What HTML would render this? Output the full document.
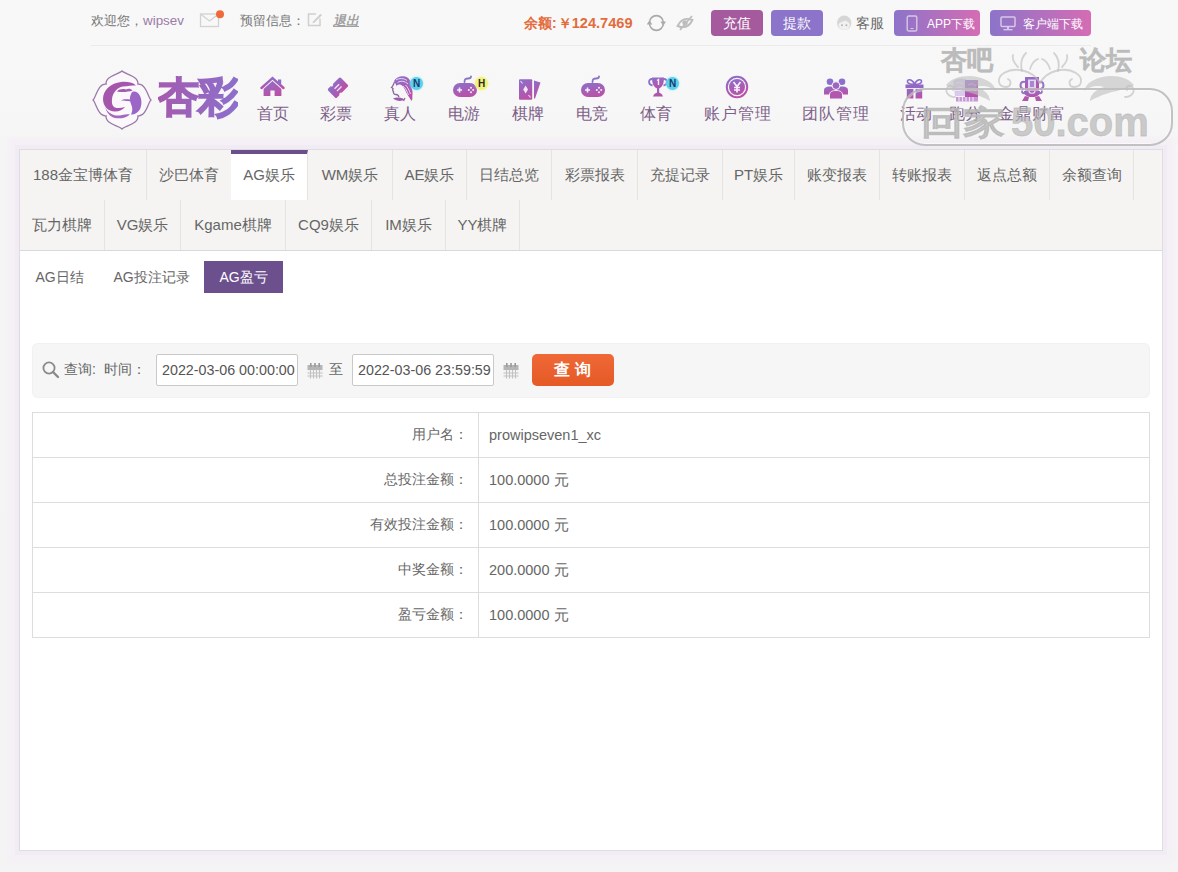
<!DOCTYPE html>
<html><head><meta charset="utf-8">
<style>
*{box-sizing:border-box;margin:0;padding:0}
html,body{width:1178px;height:872px;overflow:hidden}
body{position:relative;background:linear-gradient(#f8f8f8 0,#f7f7f7 100px,#f5f5f5 140px,#f4f4f4 872px);font-family:"Liberation Sans",sans-serif;color:#666;font-size:14px}
.abs{position:absolute;white-space:nowrap}
/* top bar */
#top{position:absolute;left:0;top:0;width:1178px;height:46px;background:#f8f8f8}
#sep{position:absolute;left:91px;top:45px;width:1000px;height:1px;background:#ebebeb}
.t13{font-size:13px;color:#777;line-height:16px}
.btn{position:absolute;top:10px;height:26px;border-radius:4px;color:#fff;font-size:14px;font-weight:500;line-height:27px;text-align:center}
.grad{background:linear-gradient(90deg,#8c74c9,#d56cb4)}
/* nav */
.nav{position:absolute;top:104px;font-size:16px;color:#7d6088;line-height:20px;white-space:nowrap}
.ico{position:absolute}
.badge{width:13px;height:13px;border-radius:50%;font-size:10px;font-weight:bold;line-height:13px;text-align:center;box-shadow:0 0 1.5px 0.5px rgba(140,225,245,.6)}
.wm{color:rgba(180,180,180,.66);font-weight:bold;line-height:1;-webkit-text-stroke:0.8px rgba(180,180,180,.66)}
/* panel */
#panel{position:absolute;left:19px;top:149px;width:1144px;height:702px;background:#fff;border:1px solid #e0dce3;box-shadow:0 0 0 4px #f1ecf3,0 0 4px 11px #f5f0f5}
#tabs{position:absolute;left:0;top:0;width:1142px;height:101px;background:#f5f4f2;border-bottom:1px solid #d9d9d9}
.tab{position:absolute;height:50px;line-height:50px;font-size:15px;color:#666;text-align:center;border-right:1px solid #e6e4e1;white-space:nowrap}
.tab.on{background:#fff;border-top:4px solid #6b4e8c;line-height:42px}
.sub{position:absolute;top:111px;height:32px;line-height:32px;font-size:14px;color:#666;text-align:center;white-space:nowrap}
.sub.on{background:#6c4f8d;color:#fff}
#search{position:absolute;left:12px;top:193px;width:1118px;height:55px;background:#f6f6f6;border-radius:6px;box-shadow:inset 0 0 0 1px #f1f1f1}
.inp{position:absolute;top:11px;width:142px;height:32px;background:#fff;border:1px solid #c9c9c9;border-radius:2px;font-size:14.3px;color:#555;line-height:30px;padding-left:5px;white-space:nowrap}
#qbtn{position:absolute;left:500px;top:11px;width:82px;height:32px;border-radius:5px;background:linear-gradient(#ef6836,#e55a27);color:#fff;font-size:16px;font-weight:bold;line-height:32px;text-align:center;letter-spacing:5px;padding-left:3px}
table{position:absolute;left:12px;top:262px;width:1118px;border-collapse:collapse}
td{height:45px;border:1px solid #dddddd;font-size:14px;color:#666}
td.l{width:446px;text-align:right;padding-right:10px}
td.r{padding-left:10px;color:#666;font-size:14.5px}
</style></head><body>

<div id="sep"></div>
<div class="abs t13" style="left:91px;top:13px">欢迎您，<span style="color:#9a7ca6;font-size:13.4px">wipsev</span></div>
<div class="abs t13" style="left:240px;top:13px">预留信息：</div>
<div class="abs t13" style="left:333px;top:13px;color:#a0a0a0;font-style:italic;font-weight:bold;text-decoration:underline">退出</div>
<div class="abs" style="left:524px;top:15px;font-size:14px;font-weight:bold;color:#e36c3c;line-height:16px">余额:<span style="font-size:14px;margin-left:1px">￥</span><span style="font-size:14.6px">124.7469</span></div>

<div class="btn" style="left:711px;width:52px;background:#a45a9d">充值</div>
<div class="btn" style="left:771px;width:52px;background:#8b74c9">提款</div>
<div class="abs t13" style="left:856px;top:15px;font-size:14px;color:#6a6a6a">客服</div>
<div class="btn grad" style="left:894px;width:86px;font-size:12px;font-weight:500;padding-left:28px;line-height:28px">APP下载</div>
<div class="btn grad" style="left:990px;width:101px;font-size:12px;font-weight:500;padding-left:25px;line-height:28px">客户端下载</div>


<svg width="0" height="0" style="position:absolute">
 <defs>
  <linearGradient id="pg" x1="0" y1="0" x2="0.35" y2="1">
   <stop offset="0" stop-color="#8a70cc"/><stop offset="1" stop-color="#b852a8"/>
  </linearGradient>
  <linearGradient id="lg" x1="0" y1="0" x2="1" y2="0.3">
   <stop offset="0" stop-color="#a558b0"/><stop offset="1" stop-color="#8c6fcc"/>
  </linearGradient>
 </defs>
</svg>
<!-- top icons -->
<svg class="ico" style="left:199px;top:10px" width="26" height="18" viewBox="0 0 26 18">
 <rect x="1.5" y="4" width="18" height="12.5" fill="none" stroke="#d2d2d2" stroke-width="1.3"/>
 <path d="M1.8 4.3 L10.5 11 L19.2 4.3" fill="none" stroke="#d2d2d2" stroke-width="1.3"/>
 <circle cx="21" cy="4.2" r="4" fill="#ef6a3a"/>
</svg>
<svg class="ico" style="left:307px;top:12px" width="16" height="15" viewBox="0 0 16 15">
 <path d="M9 2 H1.5 V13.5 H13 V6.5" fill="none" stroke="#cfcfcf" stroke-width="1.5"/>
 <path d="M6 9.5 L13.5 1.8 L15 3.2 L7.3 10.8 L5.6 11.2 Z" fill="#cfcfcf"/>
</svg>
<svg class="ico" style="left:647px;top:14px" width="19" height="18" viewBox="0 0 19 18">
 <path d="M2.5 8.5 A6.9 6.9 0 0 1 16.3 8.5" fill="none" stroke="#aaaaaa" stroke-width="1.6"/>
 <path d="M16.3 9.5 A6.9 6.9 0 0 1 2.5 9.5" fill="none" stroke="#aaaaaa" stroke-width="1.6"/>
 <path d="M13.4 7.6 L19 7.6 L16.3 11.8 Z" fill="#aaaaaa"/>
 <path d="M-0.3 10.4 L5.3 10.4 L2.5 6.2 Z" fill="#aaaaaa"/>
</svg>
<svg class="ico" style="left:676px;top:14px" width="18" height="18" viewBox="0 0 18 18">
 <g transform="rotate(-22 9 9)">
  <path d="M1 9 Q9 1.5 17 9 Q9 16.5 1 9Z" fill="none" stroke="#bdbdbd" stroke-width="1.9"/>
  <circle cx="9" cy="9" r="2.6" fill="#bdbdbd"/>
 </g>
 <path d="M4 16 L16 2" stroke="#bdbdbd" stroke-width="1.8"/>
</svg>
<svg class="ico" style="left:836px;top:13px" width="17" height="18" viewBox="0 0 17 18">
 <circle cx="8.2" cy="9.8" r="7.2" fill="#d6d6d6"/>
 <path d="M2.6 11 C4 9 7 8.5 9.5 7.5 C11 8.5 13 9.5 13.8 11 C13.8 14.5 11.5 16.8 8.2 16.8 C4.9 16.8 2.6 14.5 2.6 11Z" fill="#f1f1f1"/>
 <circle cx="6" cy="12.2" r="1" fill="#b5b5b5"/><circle cx="10.4" cy="12.2" r="1" fill="#b5b5b5"/>
</svg>
<svg class="ico" style="left:906px;top:15px" width="12" height="17" viewBox="0 0 12 17">
 <rect x="1.2" y="1" width="9.6" height="15" rx="1.6" fill="none" stroke="rgba(255,255,255,.6)" stroke-width="1.4"/>
 <rect x="4.5" y="13" width="3" height="1" fill="rgba(255,255,255,.6)"/>
</svg>
<svg class="ico" style="left:1000px;top:16px" width="16" height="15" viewBox="0 0 16 15">
 <rect x="1" y="1" width="14" height="9.5" rx="1" fill="none" stroke="rgba(255,255,255,.6)" stroke-width="1.5"/>
 <rect x="7" y="11" width="2" height="2" fill="rgba(255,255,255,.6)"/>
 <rect x="3.5" y="13" width="9" height="1.4" fill="rgba(255,255,255,.6)"/>
</svg>

<!-- logo -->
<svg class="ico" style="left:91px;top:69px" width="62" height="62" viewBox="0 0 62 62">
 <path d="M 31 2 C 33.50 5.00 48.00 7.00 46.90 15.10 C 55.00 14.00 57.00 28.50 60.00 31.00 C 57.00 33.50 55.00 48.00 46.90 46.90 C 48.00 55.00 33.50 57.00 31.00 60.00 C 28.50 57.00 14.00 55.00 15.10 46.90 C 7.00 48.00 5.00 33.50 2.00 31.00 C 5.00 28.50 7.00 14.00 15.10 15.10 C 14.00 7.00 28.50 5.00 31.00 2.00 Z" fill="#fbf8fc" stroke="#9b7aa8" stroke-width="1.3"/>
 <path d="M45 16.4 C41 13 35 12.5 30 13 C20 14 12 21 12 30 C12 37 17 42.5 24 42.5 C28.5 42.5 32 40.5 34 38 C30.5 39 26.5 39.5 24 38.5 C21.5 37.5 20.5 34 21 30.5 C21.5 24 26 18.5 32 17.5 C37 16.8 41 16.5 45 16.4 Z" fill="#a456ac"/>
 <path d="M26 22.5 C28 20 32 19.5 35 20.5 C37 19 40 19.5 41.5 21.5 C38 23 30 23.5 26 22.5Z" fill="#a25cb2"/>
 <path d="M42 22.5 C45 22 48 24 49 27 C51 31 51 37 48.5 41 C46.5 44 43 46 40 45.5 C42 42 41.5 38 40 35 C38.5 32 38.5 28 40 25 C40.5 24 41 23 42 22.5Z" fill="#9b66c6"/>
 <path d="M30 31.5 C32 30 35 30 39 30.5 L39 32.2 C35 31.8 32 31.8 30 31.5Z" fill="#9b62c0"/>
 <path d="M14 38 C17 44 22 47 28 46.5 C32 46 35 44.5 39 45.5 C35 49 29 50 24 49 C19 48 15.5 43 14 38Z" fill="#a468bd"/>
</svg>
<div class="abs" id="logotxt" style="left:158px;top:69px;font-size:41px;font-weight:900;line-height:56px;letter-spacing:-1px;background:linear-gradient(90deg,#a55aaf,#8c70cc);-webkit-background-clip:text;background-clip:text;color:transparent;-webkit-text-stroke:1.6px transparent">杏彩</div>
<!-- nav icons -->
<svg class="ico" style="left:260px;top:76px" width="26" height="22" viewBox="0 0 26 22">
 <path d="M1.5 12 L12.5 2 L23.5 12" fill="none" stroke="url(#pg)" stroke-width="2.4" stroke-linecap="round"/>
 <rect x="18" y="3.5" width="3.2" height="5" fill="#8d6fcb"/>
 <path d="M3.6 13 L12.5 5 L21.4 13 V20 H14.6 V14.5 H10.4 V20 H3.6 Z" fill="url(#pg)"/>
</svg>
<svg class="ico" style="left:324px;top:74px" width="28" height="28" viewBox="0 0 28 28">
 <g transform="translate(14 13.7) rotate(-45)">
  <rect x="-9" y="-6.2" width="18" height="12.4" rx="1.5" fill="url(#pg)"/>
  <circle cx="-2.5" cy="-6.6" r="1.6" fill="#f6f6f7"/>
  <circle cx="-2.5" cy="6.6" r="1.6" fill="#f6f6f7"/>
  <rect x="-3.2" y="-2.3" width="6.5" height="1.3" fill="#f3e6f8"/>
  <rect x="-3.2" y="1.0" width="6.5" height="1.3" fill="#f3e6f8"/>
 </g>
</svg>
<svg class="ico" style="left:387px;top:75px" width="27" height="27" viewBox="0 0 27 27">
 <path d="M7 6 C9 2 14 0.5 18 1.5 C22 2.5 24 6 24 10 C24 13 26 15 25.5 19 C25 22 26 24 24.5 26 C23 23 21 21 19.5 18 C18 15 17 12 15 10.5 C13 9 11 9.5 9.5 11 C9 9 8 8 7 6Z" fill="url(#pg)"/>
 <path d="M9 5 C12 3 17 3 20 5.5 M10.5 7.5 C13.5 5.5 18 6 21 9 M16 11 C18.5 13 20 16 21.5 20 M18.5 10 C21 12.5 22 15 23.5 19" fill="none" stroke="#efe3f7" stroke-width=".9"/>
 <path d="M7.5 7 C6.5 9 6.5 10.5 4.5 12.5 L6 13.5 C5.5 15 5.5 16 6.5 16.5 C6 18 7 19.5 9 19.5 C10.5 19.5 11.5 20.5 12 22" fill="none" stroke="#8a6a98" stroke-width="1.3"/>
 <path d="M6 23.5 C9 22 14 22 17.5 24.5 C15 26.5 9.5 26.5 6 23.5Z" fill="#a05ab0"/>
 <path d="M18 23 L16.5 26" stroke="#8a6a98" stroke-width="1.3"/>
</svg>
<svg class="ico" style="left:452px;top:75px" width="26" height="23" viewBox="0 0 26 23">
 <path d="M12.5 7 C12.5 4 14 3.5 16 3.5 C18 3.5 19 3 19 1.5" fill="none" stroke="#8a74c0" stroke-width="1.8" stroke-linecap="round"/>
 <rect x="1" y="8" width="24" height="14" rx="7" fill="url(#pg)"/>
 <path d="M5 15 H10 M7.5 12.5 V17.5" stroke="#f5eefa" stroke-width="1.6"/>
 <circle cx="19" cy="12.8" r="1" fill="#f5eefa"/><circle cx="19" cy="17.2" r="1" fill="#f5eefa"/>
 <circle cx="16.8" cy="15" r="1" fill="#f5eefa"/><circle cx="21.2" cy="15" r="1" fill="#f5eefa"/>
</svg>
<svg class="ico" style="left:517px;top:78px" width="25" height="23" viewBox="0 0 25 23">
 <rect x="2" y="1.3" width="13.2" height="20.5" rx="1" fill="url(#pg)"/>
 <path d="M17 2.5 L23.5 4.5 L18 20.5 L17 20.5Z" fill="url(#pg)"/>
 <path d="M8.6 7.5 L11 11.5 L8.6 15.5 L6.2 11.5Z" fill="#f1e5f8"/>
 <path d="M3.5 3 L5.5 5.5 M13.5 19.5 L11.5 17" stroke="#e8d8f4" stroke-width="1.2"/>
</svg>
<svg class="ico" style="left:580px;top:75px" width="26" height="23" viewBox="0 0 26 23">
 <path d="M12.5 7 C12.5 4 14 3.5 16 3.5 C18 3.5 19 3 19 1.5" fill="none" stroke="#8a74c0" stroke-width="1.8" stroke-linecap="round"/>
 <rect x="1" y="8" width="24" height="14" rx="7" fill="url(#pg)"/>
 <path d="M5 15 H10 M7.5 12.5 V17.5" stroke="#f5eefa" stroke-width="1.6"/>
 <circle cx="19" cy="12.8" r="1" fill="#f5eefa"/><circle cx="19" cy="17.2" r="1" fill="#f5eefa"/>
 <circle cx="16.8" cy="15" r="1" fill="#f5eefa"/><circle cx="21.2" cy="15" r="1" fill="#f5eefa"/>
</svg>
<svg class="ico" style="left:647px;top:76px" width="22" height="22" viewBox="0 0 22 22">
 <path d="M5 1.5 H17 C17 8 15 12 11 12.5 C7 12 5 8 5 1.5Z" fill="url(#pg)"/>
 <path d="M5 3 C1 3 1 9 5.5 9.5 M17 3 C21 3 21 9 16.5 9.5" fill="none" stroke="#8d6fcb" stroke-width="1.8"/>
 <rect x="10" y="12" width="2.2" height="5" fill="#9a64be"/>
 <path d="M6 20.5 C7 17.5 9 16.5 11 16.5 C13 16.5 15 17.5 16 20.5Z" fill="#b056a8"/>
 <path d="M10 4.5 L11.5 3.5 V9" fill="none" stroke="#f4ecf8" stroke-width="1.4"/>
</svg>
<svg class="ico" style="left:725px;top:75px" width="24" height="24" viewBox="0 0 24 24">
 <circle cx="12" cy="12" r="10.2" fill="none" stroke="url(#pg)" stroke-width="2"/>
 <circle cx="12" cy="12" r="8" fill="url(#pg)"/>
 <path d="M8.5 7 L12 11.5 L15.5 7 M12 11.5 V17.5 M9 12.5 H15 M9 15 H15" fill="none" stroke="#f6eefa" stroke-width="1.7"/>
</svg>
<svg class="ico" style="left:823px;top:78px" width="26" height="22" viewBox="0 0 26 22">
 <circle cx="7" cy="3.8" r="3.3" fill="#8c70cc"/>
 <path d="M1 16.5 V12.5 C1 9.5 3.5 8.5 7 8.5 C10.5 8.5 13 9.5 13 12.5 V16.5Z" fill="url(#pg)"/>
 <circle cx="19" cy="3.8" r="3.3" fill="#8c70cc"/>
 <path d="M13 16.5 V12.5 C13 9.5 15.5 8.5 19 8.5 C22.5 8.5 25 9.5 25 12.5 V16.5Z" fill="url(#pg)"/>
 <circle cx="13" cy="7.6" r="3.9" fill="#9a66c0" stroke="#f6f1f9" stroke-width="1"/>
 <path d="M6.5 21 V17 C6.5 13.5 9.5 12.5 13 12.5 C16.5 12.5 19.5 13.5 19.5 17 V21Z" fill="#b058ad" stroke="#f6f1f9" stroke-width="1"/>
</svg>
<svg class="ico" style="left:904px;top:78px" width="21" height="22" viewBox="0 0 21 22">
 <path d="M10.5 6 C8 1 3 0.5 3.5 4 C4 6 8 6.5 10.5 6 C13 6.5 17 6 17.5 4 C18 0.5 13 1 10.5 6Z" fill="none" stroke="#8d6fcb" stroke-width="1.6"/>
 <rect x="1.5" y="6.5" width="18" height="3.6" fill="#9268c4"/>
 <rect x="2.8" y="11" width="6.6" height="9.5" fill="url(#pg)"/>
 <rect x="11.6" y="11" width="6.6" height="9.5" fill="url(#pg)"/>
</svg>
<svg class="ico" style="left:952px;top:76px" width="28" height="26" viewBox="0 0 28 26">
 <path d="M1 5 C5 2 10 2 14 3 L14 20 L3 20 Z" fill="#d9c9ea"/>
 <path d="M4 8 C6 6 9 6 11 8 M3 13 C6 11 9 11 12 13" fill="none" stroke="#f4eef8" stroke-width="1"/>
 <path d="M13 4 L26 4 L26 21 L13 21 Z" fill="url(#pg)"/>
 <path d="M16 9 C19 7 22 8 24 10 M17 14 C19 13 22 13 24 15" fill="none" stroke="#c7a6e0" stroke-width="1"/>
 <path d="M4 21 H26 V25.5 H4Z" fill="#c795d8"/>
 <path d="M7 21 V25.5 M10.5 21 V25.5 M14 21 V25.5 M17.5 21 V25.5 M21 21 V25.5" stroke="#f1e6f5" stroke-width="1.1"/>
</svg>
<svg class="ico" style="left:1018px;top:76px" width="28" height="26" viewBox="0 0 28 26">
 <rect x="7" y="1" width="14" height="14" fill="url(#pg)"/>
 <rect x="10" y="3.5" width="8" height="9" fill="#e3d4f1"/>
 <path d="M12 5 H16 V11 H12Z" fill="#a886d0"/>
 <path d="M7 6 C2 5 1 11 5 13 C3 15 4 18 7 17 M21 6 C26 5 27 11 23 13 C25 15 24 18 21 17" fill="none" stroke="#9a72c6" stroke-width="2"/>
 <path d="M6 15 H22 C22 19 19 21 14 21 C9 21 6 19 6 15Z" fill="url(#pg)"/>
 <path d="M11 15 C11 18 17 18 17 15" fill="none" stroke="#e8dcf3" stroke-width="1.2"/>
 <path d="M7 20 L4 25 H10 L11 21 M21 20 L24 25 H18 L17 21" fill="#b158ad"/>
</svg>
<!-- badges -->
<div class="abs badge" style="left:410px;top:77px;background:#5ccfec;color:#173a6a">N</div>
<div class="abs badge" style="left:475px;top:77px;background:#f2f27a;color:#2a2a2a;box-shadow:0 0 1.5px .5px rgba(245,245,150,.7)">H</div>
<div class="abs badge" style="left:666px;top:77px;background:#5ccfec;color:#173a6a">N</div>

<!-- nav -->
<div class="nav" style="left:257px">首页</div>
<div class="nav" style="left:320px">彩票</div>
<div class="nav" style="left:384px">真人</div>
<div class="nav" style="left:448px">电游</div>
<div class="nav" style="left:512px">棋牌</div>
<div class="nav" style="left:576px">电竞</div>
<div class="nav" style="left:640px">体育</div>
<div class="nav" style="left:704px;letter-spacing:1px">账户管理</div>
<div class="nav" style="left:802px;letter-spacing:1px">团队管理</div>
<div class="nav" style="left:900px">活动</div>
<div class="nav" style="left:949px">跑分</div>
<div class="nav" style="left:998px;letter-spacing:1px">金鼎财富</div>

<div id="panel">
 <div id="tabs">
  <div class="tab" style="left:0;width:127px">188金宝博体育</div>
  <div class="tab" style="left:127px;width:85px">沙巴体育</div>
  <div class="tab on" style="left:211px;width:77px">AG娱乐</div>
  <div class="tab" style="left:288px;width:85px">WM娱乐</div>
  <div class="tab" style="left:373px;width:74px">AE娱乐</div>
  <div class="tab" style="left:447px;width:85px">日结总览</div>
  <div class="tab" style="left:532px;width:86px">彩票报表</div>
  <div class="tab" style="left:618px;width:85px">充提记录</div>
  <div class="tab" style="left:703px;width:72px">PT娱乐</div>
  <div class="tab" style="left:775px;width:85px">账变报表</div>
  <div class="tab" style="left:860px;width:85px">转账报表</div>
  <div class="tab" style="left:945px;width:85px">返点总额</div>
  <div class="tab" style="left:1030px;width:84px">余额查询</div>
  <div class="tab" style="left:0;top:50px;width:85px">瓦力棋牌</div>
  <div class="tab" style="left:85px;top:50px;width:76px">VG娱乐</div>
  <div class="tab" style="left:161px;top:50px;width:105px">Kgame棋牌</div>
  <div class="tab" style="left:266px;top:50px;width:86px">CQ9娱乐</div>
  <div class="tab" style="left:352px;top:50px;width:74px">IM娱乐</div>
  <div class="tab" style="left:426px;top:50px;width:74px">YY棋牌</div>
 </div>
 <div class="sub" style="left:0;width:79px">AG日结</div>
 <div class="sub" style="left:79px;width:105px">AG投注记录</div>
 <div class="sub on" style="left:184px;width:79px">AG盈亏</div>

 <div id="search">
  <svg class="ico" style="left:10px;top:18px" width="18" height="18" viewBox="0 0 18 18">
   <circle cx="7" cy="7" r="5.6" fill="none" stroke="#8a8a8a" stroke-width="1.8"/>
   <path d="M11 11 L16 16" stroke="#8a8a8a" stroke-width="2.4" stroke-linecap="round"/>
  </svg>
  <div class="abs" style="left:32px;top:18px;font-size:14px;color:#666;line-height:16px">查询:&nbsp; 时间：</div>
  <div class="inp" style="left:124px">2022-03-06 00:00:00</div>
  <svg class="ico" style="left:275px;top:19px" width="16" height="17" viewBox="0 0 16 17">
   <rect x="0.5" y="3" width="15" height="5" fill="#b5b5b5"/>
   <rect x="3" y="1" width="1.6" height="4" fill="#9a9a9a"/><rect x="7.2" y="1" width="1.6" height="4" fill="#9a9a9a"/><rect x="11.4" y="1" width="1.6" height="4" fill="#9a9a9a"/>
   <rect x="0.5" y="8" width="15" height="8.5" fill="#f2f2f2"/>
   <path d="M3.5 8 V16.5 M6.5 8 V16.5 M9.5 8 V16.5 M12.5 8 V16.5 M0.5 11 H15.5 M0.5 14 H15.5" stroke="#c2c2c2" stroke-width="1"/>
  </svg>
  <div class="abs" style="left:297px;top:18px;font-size:14px;color:#666;line-height:16px">至</div>
  <svg class="ico" style="left:471px;top:19px" width="16" height="17" viewBox="0 0 16 17">
   <rect x="0.5" y="3" width="15" height="5" fill="#b5b5b5"/>
   <rect x="3" y="1" width="1.6" height="4" fill="#9a9a9a"/><rect x="7.2" y="1" width="1.6" height="4" fill="#9a9a9a"/><rect x="11.4" y="1" width="1.6" height="4" fill="#9a9a9a"/>
   <rect x="0.5" y="8" width="15" height="8.5" fill="#f2f2f2"/>
   <path d="M3.5 8 V16.5 M6.5 8 V16.5 M9.5 8 V16.5 M12.5 8 V16.5 M0.5 11 H15.5 M0.5 14 H15.5" stroke="#c2c2c2" stroke-width="1"/>
  </svg>
  <div class="inp" style="left:320px">2022-03-06 23:59:59</div>
  <div id="qbtn">查询</div>
 </div>

 <table>
  <tr><td class="l">用户名：</td><td class="r">prowipseven1_xc</td></tr>
  <tr><td class="l">总投注金额：</td><td class="r">100.0000 元</td></tr>
  <tr><td class="l">有效投注金额：</td><td class="r">100.0000 元</td></tr>
  <tr><td class="l">中奖金额：</td><td class="r">200.0000 元</td></tr>
  <tr><td class="l">盈亏金额：</td><td class="r">100.0000 元</td></tr>
 </table>
</div>

<div style="position:absolute;left:0;top:0;z-index:5">
<!-- watermark -->
<div class="abs" style="left:902px;top:88px;width:271px;height:58px;border:2.5px solid rgba(185,185,185,.85);border-radius:23px;box-shadow:inset 0 0 0 1px rgba(255,255,255,.5)"></div>
<div class="abs wm" style="left:941px;top:47px;font-size:26px;font-weight:900;letter-spacing:0px">杏吧</div>
<div class="abs wm" style="left:1080px;top:47px;font-size:26px;font-weight:900">论坛</div>
<div class="abs wm" style="left:921px;top:102px;font-size:40px;font-weight:bold;letter-spacing:0px"><span style="display:inline-block;transform:scale(1.05,0.82);transform-origin:0 60%;width:90px;font-weight:900">回家</span>50.com</div>
<svg class="ico" style="left:940px;top:45px" width="200" height="65" viewBox="0 0 200 65">
 <g fill="rgba(190,190,190,.6)">
  <path d="M6 40 C14 30 34 28 48 36 C52 38 55 42 56 46 C50 41 42 40 36 42 C44 44 50 50 50 56 C40 50 26 46 14 44 C10 43 7 42 6 40Z"/>
  <path d="M194 40 C186 30 166 28 152 36 C148 38 145 42 144 46 C150 41 158 40 164 42 C156 44 150 50 150 56 C160 50 174 46 186 44 C190 43 193 42 194 40Z"/>
 </g>
 <g fill="none" stroke="rgba(190,190,190,.65)" stroke-width="1.8" stroke-linecap="round">
  <path d="M100 38 C92 24 74 22 64 28 C56 33 58 42 66 42 C71 42 72 36 68 34"/>
  <path d="M100 38 C108 24 126 22 136 28 C144 33 142 42 134 42 C129 42 128 36 132 34"/>
  <path d="M82 26 C80 18 82 12 86 8 M78 22 C74 18 72 14 73 10 M90 24 C92 18 95 15 98 14"/>
  <path d="M118 26 C120 18 118 12 114 8 M122 22 C126 18 128 14 127 10 M110 24 C108 18 105 15 102 14"/>
  <path d="M185 52 C192 52 196 46 192 42 C189 39 185 42 187 45"/>
  <path d="M15 52 C8 52 4 46 8 42 C11 39 15 42 13 45"/>
 </g>
</svg>
</div>
</body></html>
